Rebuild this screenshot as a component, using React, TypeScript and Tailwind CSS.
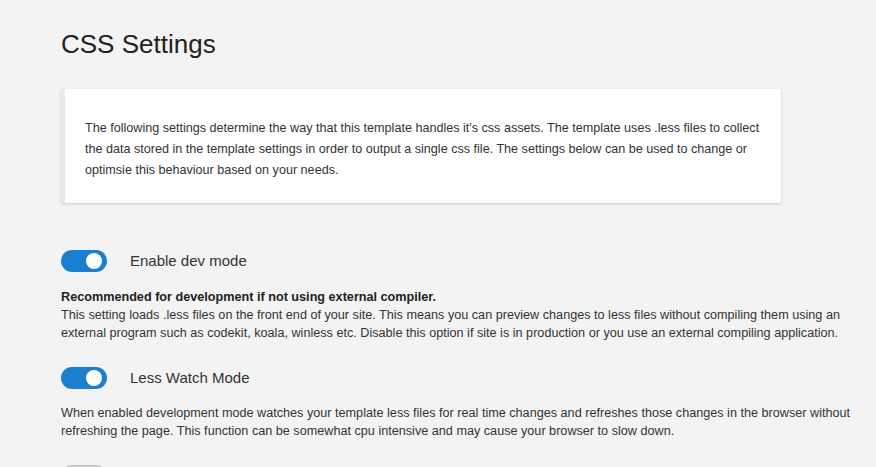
import React from "react";

// ====================================
// TYPES
// ====================================

type Setting = {
  id: string;
  label: string;
  enabled: boolean;
  heading?: string;
  lines: string[];
};

const settings: Setting[] = [
  {
    id: "dev",
    label: "Enable dev mode",
    enabled: true,
    heading: "Recommended for development if not using external compiler.",
    lines: [
      "This setting loads .less files on the front end of your site. This means you can preview changes to less files without compiling them using an",
      "external program such as codekit, koala, winless etc. Disable this option if site is in production or you use an external compiling application.",
    ],
  },
  {
    id: "watch",
    label: "Less Watch Mode",
    enabled: true,
    lines: [
      "When enabled development mode watches your template less files for real time changes and refreshes those changes in the browser without",
      "refreshing the page. This function can be somewhat cpu intensive and may cause your browser to slow down.",
    ],
  },
  {
    // next row is only partly in view
    id: "next",
    label: "",
    enabled: false,
    lines: [],
  },
];

function Toggle({ on }: { on: boolean }) {
  return (
    <div
      className={
        on
          ? "flex h-[22px] w-[46px] shrink-0 items-center justify-end rounded-full bg-[#1b7fd0] pr-[5px]"
          : "flex h-[22px] w-[46px] shrink-0 items-center justify-start rounded-full bg-[#dcdcdc] pl-[5px] shadow-[inset_0_1px_2px_rgba(0,0,0,0.15)]"
      }
    >
      <div className="h-[16px] w-[16px] rounded-full bg-white" />
    </div>
  );
}

export default function App() {
  return (
    <div
      className="h-[467px] w-full overflow-hidden bg-[#f3f3f3] text-[#222]"
      style={{ fontFamily: '"Liberation Sans", Arial, sans-serif' }}
    >
      <div className="pl-[61px] pr-[20px] pt-[27px]">
        {/* HEADER */}
        <h1 className="text-[26px] leading-[34px] text-[#222]">CSS Settings</h1>

        {/* INFO CARD */}
        <div className="mt-[28px] w-[720px] rounded-[3px] border-l-4 border-[#e9e9e9] bg-white pb-[22px] pl-[20px] pr-[10px] pt-[29px] shadow-[0_1px_3px_rgba(0,0,0,0.18)]">
          <p className="whitespace-nowrap text-[12.6px] leading-[21px] text-[#333]">
            The following settings determine the way that this template handles it's css assets. The template uses .less files to collect
            <br />
            the data stored in the template settings in order to output a single css file. The settings below can be used to change or
            <br />
            optimsie this behaviour based on your needs.
          </p>
        </div>

        {/* SETTINGS */}
        <div className="mt-[47px] flex flex-col gap-[25px]">
          {settings.map((s) => (
            <div key={s.id}>
              <div className="flex items-center gap-[23px]">
                <Toggle on={s.enabled} />
                {s.label && <span className="text-[15px] text-[#333]">{s.label}</span>}
              </div>
              {s.lines.length > 0 && (
                <div className="mt-[15px] whitespace-nowrap text-[12.65px] leading-[18px] text-[#333]">
                  {s.heading && <p className="font-bold text-[#222]">{s.heading}</p>}
                  {s.lines.map((line) => (
                    <p key={line}>{line}</p>
                  ))}
                </div>
              )}
            </div>
          ))}
        </div>
      </div>
    </div>
  );
}
